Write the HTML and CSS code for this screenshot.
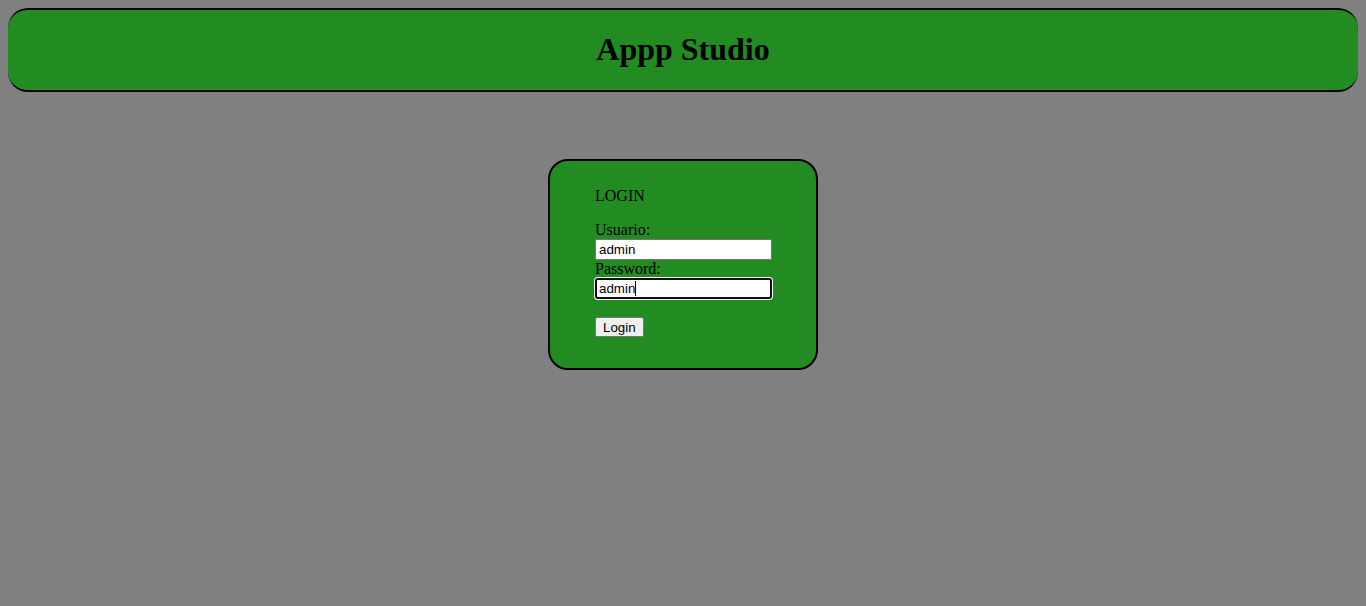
FILE: index.html
```html
<!DOCTYPE html>
<html lang="es">
<head>
<meta charset="utf-8">
<title>Appp Studio</title>
<link rel="stylesheet" href="styles.css">
</head>
<body>
<header class="header">
  <h1 class="header-title">Appp Studio</h1>
</header>
<main class="login-box">
  <form class="login-form">
    <div class="login-title">LOGIN</div>
    <label class="field-label" for="user">Usuario:</label>
    <input class="field-input" id="user" type="text" value="admin">
    <label class="field-label" for="pass">Password:</label>
    <span class="focus-wrap">
      <input class="field-input is-focused" id="pass" type="text" value="admin">
      <span class="caret"></span>
    </span>
    <div class="actions">
      <button class="login-button" type="button">Login</button>
    </div>
  </form>
</main>
</body>
</html>
```
FILE: styles.css
```css
html, body {
  background: #808080;
}
body {
  margin: 8px;
  font-family: "Liberation Serif", "Times New Roman", serif;
  font-size: 16px;
  color: #000;
}
.header {
  background: #228b22;
  border-top: 2px solid #000;
  border-bottom: 2px solid #000;
  border-radius: 20px;
}
.header-title {
  margin: 21px 0 22px;
  text-align: center;
  font-size: 32px;
  font-weight: bold;
  line-height: 37px;
}
.login-box {
  box-sizing: border-box;
  width: 270px;
  margin: 67px auto 0;
  background: #228b22;
  border: 2px solid #000;
  border-radius: 20px;
  padding: 26px 45px 31px;
}
.login-form {
  display: flex;
  flex-direction: column;
  align-items: flex-start;
}
.login-title {
  line-height: 18px;
  margin-bottom: 16px;
}
.field-label {
  line-height: 18px;
  height: 18px;
}
.field-input {
  box-sizing: border-box;
  width: 177px;
  height: 21px;
  margin: 0;
  padding: 1px 2px 1px 3px;
  border: 1px solid #767676;
  border-radius: 0;
  background: #fff;
  font-family: "Liberation Sans", Arial, sans-serif;
  font-size: 13.333px;
  color: #000;
  outline: none;
}
.focus-wrap {
  position: relative;
  display: block;
  height: 21px;
}
.field-input.is-focused {
  border: 2px solid #101010;
  border-radius: 3px;
  padding: 0 1px 0 2px;
  box-shadow: 0 0 0 1px #fff;
}
.caret {
  position: absolute;
  left: 40px;
  top: 3px;
  width: 1px;
  height: 15px;
  background: #000;
}
.actions {
  margin-top: 18px;
}
.login-button {
  box-sizing: border-box;
  height: 20px;
  margin: 0;
  padding: 0 7px;
  background: #efefef;
  border: 1px solid #767676;
  border-radius: 2px;
  font-family: "Liberation Sans", Arial, sans-serif;
  font-size: 13.333px;
  color: #000;
}
```
